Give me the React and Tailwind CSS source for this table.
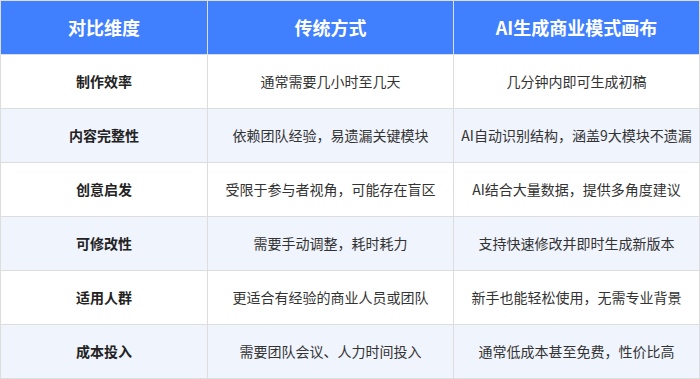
import React from 'react'

const rows = [
  ['制作效率', '通常需要几小时至几天', '几分钟内即可生成初稿'],
  ['内容完整性', '依赖团队经验，易遗漏关键模块', 'AI自动识别结构，涵盖9大模块不遗漏'],
  ['创意启发', '受限于参与者视角，可能存在盲区', 'AI结合大量数据，提供多角度建议'],
  ['可修改性', '需要手动调整，耗时耗力', '支持快速修改并即时生成新版本'],
  ['适用人群', '更适合有经验的商业人员或团队', '新手也能轻松使用，无需专业背景'],
  ['成本投入', '需要团队会议、人力时间投入', '通常低成本甚至免费，性价比高'],
]

function App() {
  return (
    <div className="w-[700px] h-[379px] bg-white font-['Noto_Sans_CJK_SC','Noto_Sans',sans-serif]">
      <table className="w-[700px] border-collapse table-fixed">
        <colgroup>
          <col className="w-[207px]" />
          <col className="w-[246px]" />
          <col />
        </colgroup>
        <thead>
          <tr className="h-[54px] bg-[#4080ff] text-white">
            <th className="border border-[#dddddd] text-[18px] font-bold">对比维度</th>
            <th className="border border-[#dddddd] text-[18px] font-bold">传统方式</th>
            <th className="border border-[#dddddd] text-[18px] font-bold">AI生成商业模式画布</th>
          </tr>
        </thead>
        <tbody>
          {rows.map((r, i) => (
            <tr key={i} className={i % 2 === 1 ? 'h-[54px] bg-[#f0f4fd]' : 'h-[54px] bg-white'}>
              <td className="border border-[#dddddd] text-center text-[14px] font-bold text-[#222]">{r[0]}</td>
              <td className="border border-[#dddddd] text-center text-[14px] text-[#333]">{r[1]}</td>
              <td className="border border-[#dddddd] text-center text-[14px] text-[#333]">{r[2]}</td>
            </tr>
          ))}
        </tbody>
      </table>
    </div>
  )
}

export default App
